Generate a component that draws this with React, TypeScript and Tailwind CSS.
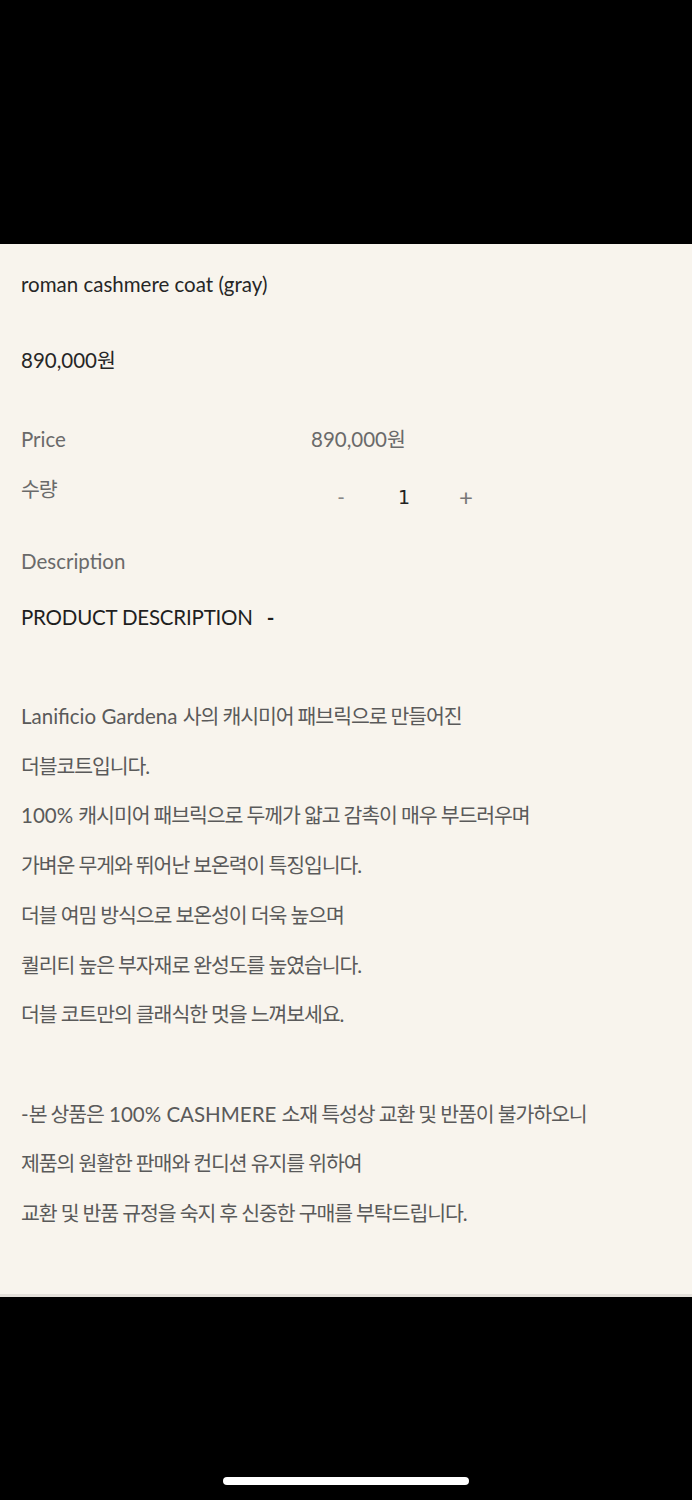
import React from "react";

const font = { fontFamily: 'Lato, "Noto Sans CJK KR", sans-serif' };

function T({ text }: { text: string }) {
  const parts = text.split(/([\uAC00-\uD7A3]+(?:\s[\uAC00-\uD7A3]+)*)/);
  return (
    <>
      {parts.map((p, i) =>
        /[\uAC00-\uD7A3]/.test(p) ? (
          <span key={i} className="tracking-[-1.1px]">
            {p}
          </span>
        ) : (
          <React.Fragment key={i}>{p}</React.Fragment>
        )
      )}
    </>
  );
}

export default function App() {
  const lines1 = [
    "Lanificio Gardena 사의 캐시미어 패브릭으로 만들어진",
    "더블코트입니다.",
    "100% 캐시미어 패브릭으로 두께가 얇고 감촉이 매우 부드러우며",
    "가벼운 무게와 뛰어난 보온력이 특징입니다.",
    "더블 여밈 방식으로 보온성이 더욱 높으며",
    "퀄리티 높은 부자재로 완성도를 높였습니다.",
    "더블 코트만의 클래식한 멋을 느껴보세요.",
  ];
  const lines2 = [
    "-본 상품은 100% CASHMERE 소재 특성상 교환 및 반품이 불가하오니",
    "제품의 원활한 판매와 컨디션 유지를 위하여",
    "교환 및 반품 규정을 숙지 후 신중한 구매를 부탁드립니다.",
  ];
  return (
    <div className="w-[692px] h-[1500px] bg-black flex flex-col" style={font}>
      <div className="h-[244px] shrink-0" />
      <div className="h-[1053px] bg-[#f8f4ed] border-b-[3px] border-[#e4e0da] px-[21px] flex flex-col shrink-0">
        <div className="pt-[28px] text-[20.5px] leading-[24px] text-[#262626]">roman cashmere coat (gray)</div>
        <div className="pt-[52px] text-[20.5px] leading-[24px] text-[#262626]">890,000원</div>
        <div className="pt-[55px] flex text-[20.5px] leading-[24px] text-[#6a6a6a]">
          <div className="w-[290px]">Price</div>
          <div>890,000원</div>
        </div>
        <div className="pt-[26px] flex items-start text-[20.5px] leading-[24px] text-[#6a6a6a]">
          <div className="w-[290px] tracking-[-1px]">수량</div>
          <div className="flex items-center pt-[8px]">
            <span className="w-[24px] text-center ml-[18px] text-[#888]">-</span>
            <span className="w-[24px] text-center ml-[39px] text-[#222]" style={{ fontFamily: '"DejaVu Sans", sans-serif', fontSize: 19 }}>1</span>
            <span className="w-[24px] text-center ml-[38px] text-[#777] text-[24px]">+</span>
          </div>
        </div>
        <div className="pt-[40px] text-[20.5px] leading-[24px] text-[#6a6a6a]">Description</div>
        <div className="pt-[32px] flex items-center text-[20.5px] leading-[24px] text-[#1e1e1e]">
          <span className="tracking-[-0.2px]">PRODUCT DESCRIPTION</span>
          <span className="ml-[14px] font-bold">-</span>
        </div>
        <div className="pt-[63px] flex flex-col text-[20.5px] leading-[49.7px] text-[#5a5a5a]">
          {lines1.map((l) => (
            <div key={l}>
              <T text={l} />
            </div>
          ))}
          <div>&nbsp;</div>
          {lines2.map((l) => (
            <div key={l}>
              <T text={l} />
            </div>
          ))}
        </div>
      </div>
      <div className="flex-1 flex items-end justify-center pb-[15px]">
        <div className="w-[246px] h-[8px] rounded-full bg-white" />
      </div>
    </div>
  );
}
